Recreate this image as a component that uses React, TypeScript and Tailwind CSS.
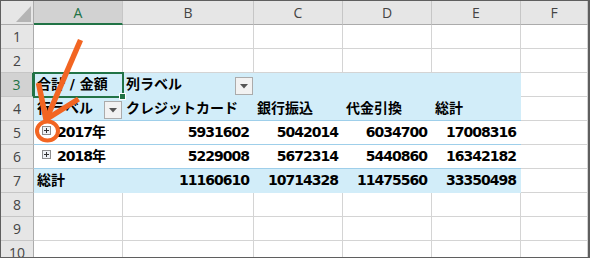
import type { ReactNode } from 'react'

const columns = ['A', 'B', 'C', 'D', 'E', 'F']
const methods = ['クレジットカード', '銀行振込', '代金引換', '総計']
const years = [
  { label: '2017年', values: ['5931602', '5042014', '6034700', '17008316'] },
  { label: '2018年', values: ['5229008', '5672314', '5440860', '16342182'] },
]
const totals = ['11160610', '10714328', '11475560', '33350498']

type Tone = 'grid' | 'band' | 'bandRule' | 'rule'

const toneClass: Record<Tone, string> = {
  grid: 'bg-white border-r border-b border-[#d4d4d4]',
  band: 'bg-[#d2edf9] border-b border-[#d2edf9]',
  bandRule: 'bg-[#d2edf9] border-b border-[#9fcfea]',
  rule: 'bg-white border-b border-[#9fcfea]',
}

function Cell({ tone = 'grid', right = false, children }: { tone?: Tone; right?: boolean; children?: ReactNode }) {
  return (
    <div
      className={`flex items-center min-w-0 overflow-visible whitespace-nowrap pl-[3px] pr-[5px] ${right ? 'justify-end' : ''} ${toneClass[tone]}`}
    >
      {children}
    </div>
  )
}

function Num({ children }: { children: ReactNode }) {
  return <span className="tracking-[-1px]">{children}</span>
}

function FilterButton() {
  return (
    <span className="ml-auto mr-[-4px] self-end mb-px flex h-[18px] w-[18px] shrink-0 items-center justify-center border border-[#ababab] bg-[#f2f2f2]">
      <svg width="8" height="5" viewBox="0 0 8 5">
        <polygon points="0,0 8,0 4,4.5" fill="#555" />
      </svg>
    </span>
  )
}

function ExpandBox() {
  return (
    <span className="ml-[5px] mr-[6px] mb-[4px] flex h-[9px] w-[9px] shrink-0 items-center justify-center border border-[#8d8d8d] bg-[#eef1f5]">
      <svg width="7" height="7" viewBox="0 0 7 7">
        <path d="M1 3.5h5M3.5 1v5" stroke="#333" strokeWidth="1" />
      </svg>
    </span>
  )
}

function RowHead({ n }: { n: number }) {
  const active = n === 3
  return (
    <div
      className={`flex items-center justify-center border-b border-b-[#c6c6c6] ${
        active ? 'bg-[#d2d2d2] text-[#217346] border-r-2 border-r-[#217346]' : 'bg-[#e6e6e6] text-[#444] border-r border-r-[#ababab]'
      }`}
    >
      {n}
    </div>
  )
}

function ColHead({ label }: { label: string }) {
  const active = label === 'A'
  return (
    <div
      className={`flex items-center justify-center border-r border-r-[#c6c6c6] ${
        active ? 'bg-[#d2d2d2] text-[#217346] border-b-2 border-b-[#217346]' : 'bg-[#e6e6e6] text-[#444] border-b border-b-[#ababab]'
      }`}
    >
      {label}
    </div>
  )
}

const head = "font-['Open_Sans',sans-serif] text-[14px]"

export default function App() {
  return (
    <div className="relative h-[258px] w-[590px] overflow-hidden bg-white">
      <div className="h-full overflow-hidden border border-r-2 border-[#5f5f5f]">
        <div className="grid grid-cols-[33px_89px_131px_89px_89px_89px_1fr] auto-rows-[24px] font-['DejaVu_Sans','Noto_Sans_CJK_JP',sans-serif] text-[14px] font-bold text-black">
          {/* column headers */}
          <div className="flex items-end justify-end border-r border-r-[#ababab] border-b border-b-[#ababab] bg-[#e6e6e6] pr-[2px] pb-[2px]">
            <svg width="15" height="16" viewBox="0 0 15 16">
              <polygon points="15,0 15,16 0,16" fill="#b4b4b4" />
            </svg>
          </div>
          {columns.map((c) => (
            <div key={c} className={`contents ${head} font-normal`}>
              <ColHead label={c} />
            </div>
          ))}

          {/* rows 1-2 */}
          {[1, 2].map((n) => (
            <div key={n} className="contents">
              <div className={`contents ${head} font-normal`}>
                <RowHead n={n} />
              </div>
              {columns.map((c) => (
                <Cell key={c} />
              ))}
            </div>
          ))}

          {/* row 3: pivot caption */}
          <div className={`contents ${head} font-normal`}>
            <RowHead n={3} />
          </div>
          <Cell tone="band">合計 / 金額</Cell>
          <Cell tone="band">
            列ラベル
            <FilterButton />
          </Cell>
          <Cell tone="band" />
          <Cell tone="band" />
          <Cell tone="band" />
          <Cell />

          {/* row 4: column labels */}
          <div className={`contents ${head} font-normal`}>
            <RowHead n={4} />
          </div>
          <Cell tone="bandRule">
            行ラベル
            <FilterButton />
          </Cell>
          {methods.map((m) => (
            <Cell key={m} tone="bandRule">
              {m}
            </Cell>
          ))}
          <Cell />

          {/* rows 5-6: years */}
          {years.map((y, i) => (
            <div key={y.label} className="contents">
              <div className={`contents ${head} font-normal`}>
                <RowHead n={5 + i} />
              </div>
              <Cell tone="rule">
                <ExpandBox />
                <Num>{y.label.slice(0, 4)}</Num>
                {y.label.slice(4)}
              </Cell>
              {y.values.map((v, j) => (
                <Cell key={j} tone="rule" right>
                  <Num>{v}</Num>
                </Cell>
              ))}
              <Cell />
            </div>
          ))}

          {/* row 7: grand total */}
          <div className={`contents ${head} font-normal`}>
            <RowHead n={7} />
          </div>
          <Cell tone="band">総計</Cell>
          {totals.map((v, j) => (
            <Cell key={j} tone="band" right>
              <Num>{v}</Num>
            </Cell>
          ))}
          <Cell />

          {/* rows 8-10 */}
          {[8, 9, 10].map((n) => (
            <div key={n} className="contents">
              <div className={`contents ${head} font-normal`}>
                <RowHead n={n} />
              </div>
              {columns.map((c) => (
                <Cell key={c} />
              ))}
            </div>
          ))}
        </div>
      </div>

      {/* active cell A3 */}
      <div className="absolute left-[33px] top-[72px] h-[26px] w-[91px] border-2 border-[#217346]">
        <span className="absolute -bottom-[4px] -right-[4px] h-[7px] w-[7px] border border-white bg-[#217346]" />
      </div>

      {/* callout arrow */}
      <svg className="pointer-events-none absolute left-0 top-0" width="590" height="258" viewBox="0 0 590 258">
        <g fill="none" stroke="#f26522" strokeWidth="5.5">
          <path d="M80.5 40 L46.5 119" />
          <path d="M38.5 83 L46 119.5 L78.5 99" strokeLinejoin="round" />
          <ellipse cx="47.5" cy="131" rx="10.5" ry="9.5" strokeWidth="4" />
        </g>
      </svg>
    </div>
  )
}
